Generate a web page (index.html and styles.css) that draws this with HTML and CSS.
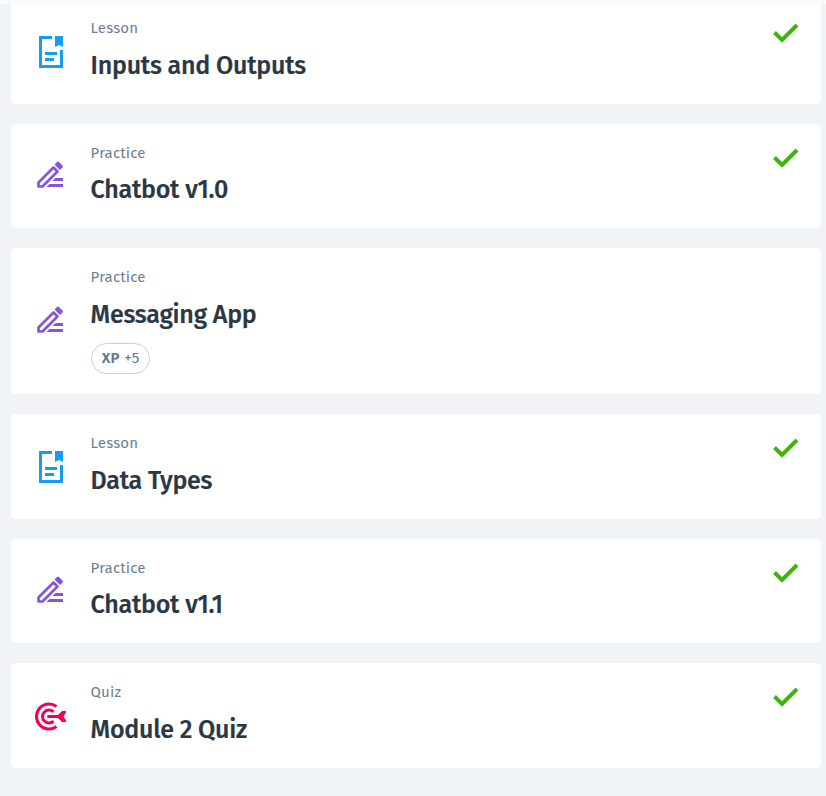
FILE: index.html
```html
<!DOCTYPE html>
<html lang="en">
<head>
<meta charset="utf-8">
<title>Module 2</title>
<link rel="stylesheet" href="styles.css">
</head>
<body>
<svg class="sprite" aria-hidden="true">
<symbol id="lesson" viewBox="0 0 32 32"><path d="M17 1.500H5.500v29h21V14M10 17.500h12M10 23.500h9" fill="none" stroke="currentColor" stroke-width="3"/><path d="M20 0h8v11l-4-2-4 2z" fill="currentColor"/></symbol>
<symbol id="practice" viewBox="0 0 32 32"><path d="M18.500 7.500 3.500 22.500v4h4l15-15z" fill="none" stroke="currentColor" stroke-width="2.700" stroke-linejoin="round"/><path d="m19.500 4.500 2.500-2.500q1-1 2 0l3.500 3.500q1 1 0 2L25 10zM20.500 18H28v3H17.500zM14.500 24H28v3H11.500z" fill="currentColor"/></symbol>
<symbol id="quiz" viewBox="0 0 32 32"><path d="M21.500 6.500A12.500 12.500 0 1 0 21.500 26.500M18.500 11.810a6.500 6.500 0 1 0 0 9.380" fill="none" stroke="currentColor" stroke-width="3"/><path d="M13.500 15H23l4-4h4v1.500l-2.500 4 2.500 4V22h-4L23 18h-9.500a1.500 1.500 0 0 1 0-3z" fill="currentColor"/></symbol>
<symbol id="check" viewBox="0 0 28 22"><path d="m3.500 10.500 7.500 7.500L26 3" fill="none" stroke="currentColor" stroke-width="4"/></symbol>
</svg>
<div class="topbar"></div>
<main class="list">
<article class="card"><svg class="icon blue"><use href="#lesson"/></svg><div class="copy"><p class="type">Lesson</p><h2 class="title">Inputs and Outputs</h2></div><svg class="check"><use href="#check"/></svg></article>
<article class="card"><svg class="icon purple"><use href="#practice"/></svg><div class="copy"><p class="type">Practice</p><h2 class="title">Chatbot v1.0</h2></div><svg class="check"><use href="#check"/></svg></article>
<article class="card tall"><svg class="icon purple"><use href="#practice"/></svg><div class="copy"><p class="type">Practice</p><h2 class="title">Messaging App</h2><span class="xp"><b>XP</b> <span>+5</span></span></div></article>
<article class="card"><svg class="icon blue"><use href="#lesson"/></svg><div class="copy"><p class="type">Lesson</p><h2 class="title">Data Types</h2></div><svg class="check"><use href="#check"/></svg></article>
<article class="card"><svg class="icon purple"><use href="#practice"/></svg><div class="copy"><p class="type">Practice</p><h2 class="title">Chatbot v1.1</h2></div><svg class="check"><use href="#check"/></svg></article>
<article class="card"><svg class="icon red"><use href="#quiz"/></svg><div class="copy"><p class="type">Quiz</p><h2 class="title">Module 2 Quiz</h2></div><svg class="check"><use href="#check"/></svg></article>
</main>
</body>
</html>
```
FILE: styles.css
```css
* { box-sizing: border-box; }
body { margin: 0; height: 796px; overflow: hidden; background: #f0f4f7; font-family: "Fira Sans", "Noto Sans", sans-serif; }
.sprite { position: absolute; width: 0; height: 0; }
.topbar { position: absolute; z-index: 1; top: 0; left: 0; width: 100%; height: 4px; background: #fafafa; }
.list { display: flex; flex-direction: column; gap: 20px; margin: -.45px 5px 0 11px; }
.card { display: grid; grid-template-columns: 32px 1fr 28px; column-gap: 24px; height: 104.45px; padding: 0 22px 0 24px; background: #fff; border-radius: 5px; }
.card.tall { height: 145.75px; }
.icon { width: 32px; height: 32px; margin-top: .4px; align-self: center; }
.tall .icon { margin-top: -1px; }
.blue { color: #169cf2; }
.purple { color: #8454da; }
.red { margin-top: 1.400px; color: #f30059; }
.check { width: 28px; height: 22px; margin-top: 22.900px; color: #3eb50b; }
.copy { margin-left: -.4px; }
.type { margin: 17.900px 0 0; font-size: 15px; line-height: 22px; letter-spacing: .15px; color: #6b7f96; }
.title { margin: 9.550px 0 0; font-size: 25px; line-height: 34px; font-weight: 500; letter-spacing: -.25px; color: #2a3744; white-space: nowrap; -webkit-text-stroke: .2px #2a3744; }
.xp { display: flex; align-items: center; justify-content: center; gap: 5px; width: 59px; height: 31px; margin: 11.500px 0 0 .4px; padding-bottom: 1px; border: 1px solid #c8d0d9; border-radius: 16px; font-size: 15px; line-height: 20px; color: #63788f; }
.xp b { font-weight: 600; }
```
